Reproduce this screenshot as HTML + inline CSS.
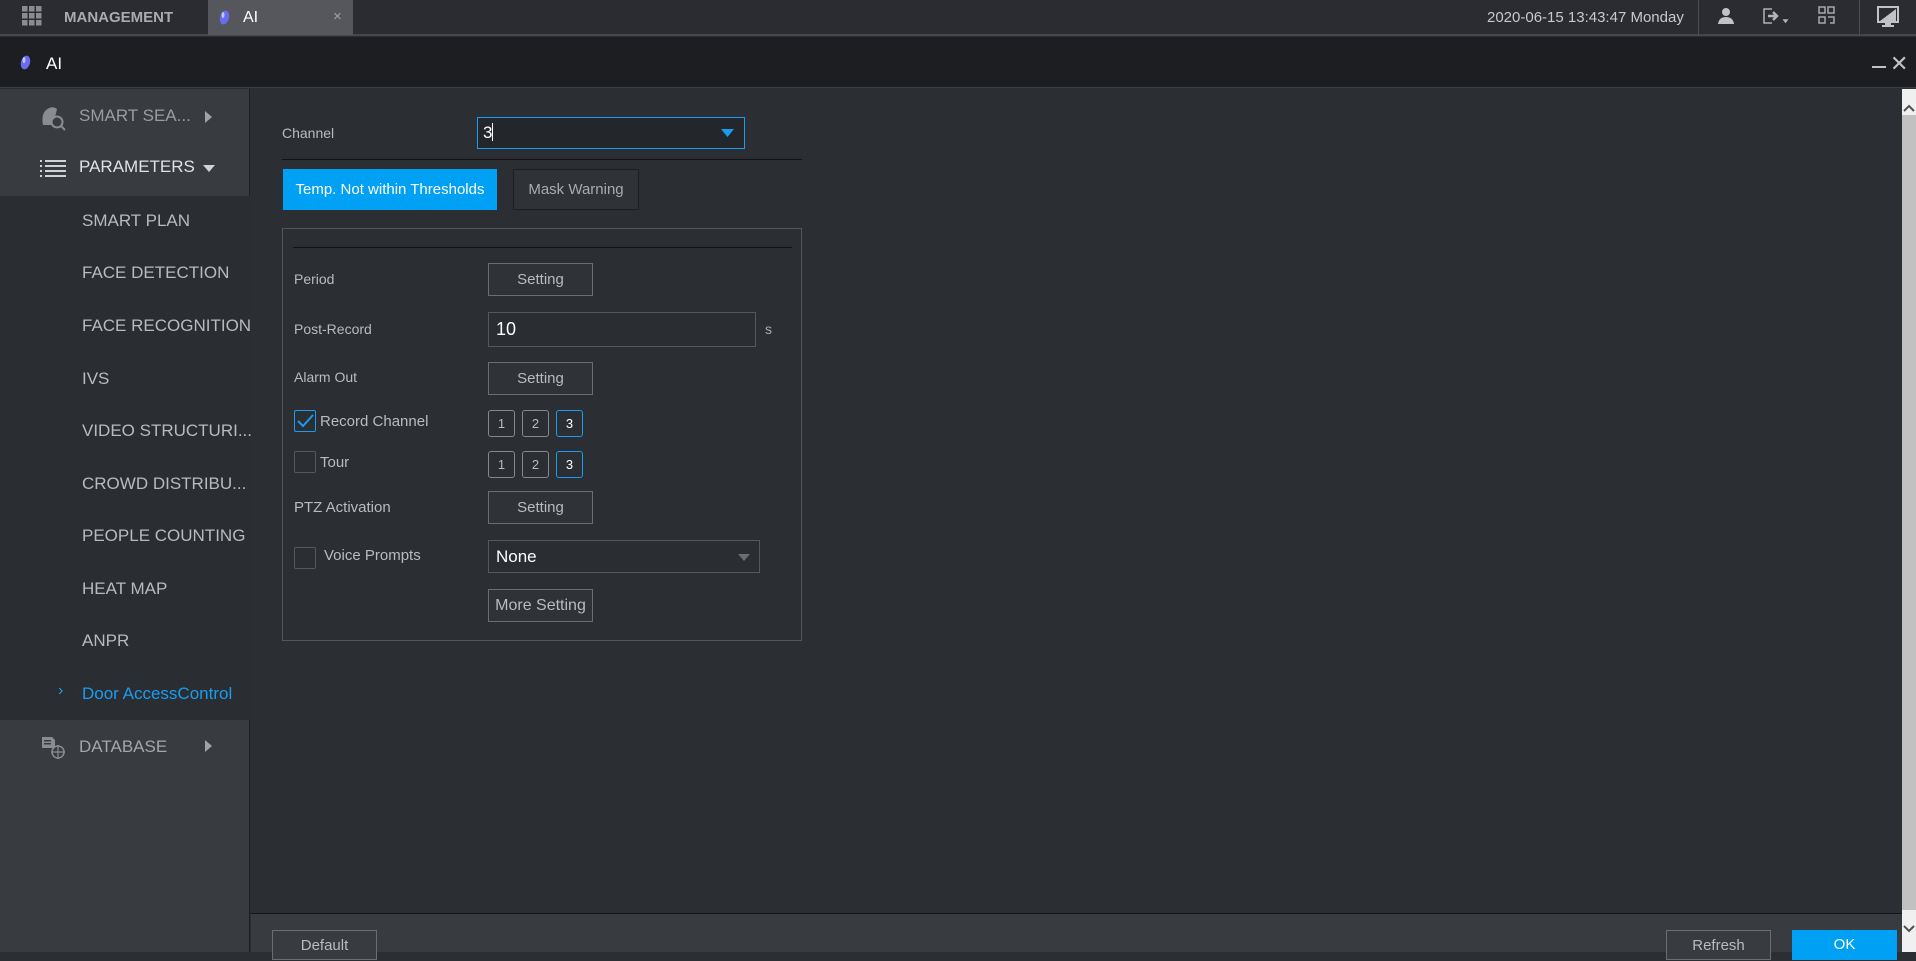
<!DOCTYPE html>
<html><head><meta charset="utf-8"><style>
*{margin:0;padding:0;box-sizing:border-box}
body{width:1916px;height:952px;overflow:hidden;background:#2b2e33;font-family:"Liberation Sans",Arial,sans-serif;position:relative;color:#c8c9cc}
.a{position:absolute}
.t{position:absolute;white-space:nowrap}
.btn{position:absolute;border:1px solid #6a6d72;background:#2f3237;color:#b9bbbe;font-size:15px;text-align:center}
.cb{position:absolute;width:22px;height:22px;border:1px solid #55585d;border-radius:2px}
.nb{position:absolute;width:27px;height:27px;border:1px solid #85888c;border-radius:3px;color:#b9bbbe;font-size:13px;text-align:center;line-height:25px}
.nb.s{border-color:#1a9cf0;color:#fff}
.side{font-size:17px;color:#b8babd}
</style></head><body>
<!-- top bar -->
<div class="a" style="left:0;top:0;width:1916px;height:36px;background:#2a2c31;border-bottom:2px solid #44474c"></div>
<svg class="a" style="left:22px;top:6px" width="20" height="20" viewBox="0 0 20 20" fill="#8a8c90"><rect x="0" y="0" width="5.5" height="5.5"/><rect x="7" y="0" width="5.5" height="5.5"/><rect x="14" y="0" width="5.5" height="5.5"/><rect x="0" y="7" width="5.5" height="5.5"/><rect x="7" y="7" width="5.5" height="5.5"/><rect x="14" y="7" width="5.5" height="5.5"/><rect x="0" y="14" width="5.5" height="5.5"/><rect x="7" y="14" width="5.5" height="5.5"/><rect x="14" y="14" width="5.5" height="5.5"/></svg>
<div class="t" style="left:64px;top:9px;font-size:15px;font-weight:bold;color:#a9abae">MANAGEMENT</div>
<div class="a" style="left:208px;top:0;width:145px;height:35px;background:#55575c"></div>
<svg class="a" style="left:219px;top:10px" width="11" height="15" viewBox="0 0 11 15"><ellipse cx="5.5" cy="7.5" rx="4.5" ry="7" fill="#6a6cf0" transform="rotate(15 5.5 7.5)"/><ellipse cx="4" cy="5" rx="1.5" ry="3" fill="#b8c8ff"/></svg>
<div class="t" style="left:243px;top:9px;font-size:16px;color:#fff">AI</div>
<div class="t" style="left:333px;top:8px;font-size:15px;color:#a0a2a6">×</div>
<div class="t" style="left:1487px;top:9px;font-size:15px;color:#c8c9cc">2020-06-15 13:43:47 Monday</div>
<div class="a" style="left:1698px;top:0;width:1px;height:36px;background:#4a4d52"></div>
<div class="a" style="left:1859px;top:0;width:1px;height:36px;background:#4a4d52"></div>
<svg class="a" style="left:1717px;top:7px" width="18" height="18" viewBox="0 0 18 18" fill="#c0c2c5"><circle cx="9" cy="5" r="4"/><path d="M1 17 Q2 10 9 10 Q16 10 17 17Z"/></svg>
<svg class="a" style="left:1762px;top:7px" width="30" height="18" viewBox="0 0 30 18" fill="none" stroke="#b0b2b5" stroke-width="1.5"><path d="M10 2H2V16H10"/><path d="M6 9H14M11 5L15 9L11 13" stroke-width="2.5"/><path d="M22 13L25 13L23.5 15Z" fill="#b0b2b5"/></svg>
<svg class="a" style="left:1818px;top:6px" width="18" height="20" viewBox="0 0 18 20" fill="none" stroke="#a6a8ab" stroke-width="1.5"><rect x="1" y="1" width="6" height="6"/><rect x="10" y="1" width="6" height="6"/><rect x="1" y="11" width="6" height="6"/><path d="M10 11H16V17H12"/></svg>
<svg class="a" style="left:1877px;top:6px" width="22" height="22" viewBox="0 0 22 22"><rect x="1" y="1" width="20" height="15" fill="none" stroke="#c0c2c5" stroke-width="2"/><path d="M3 15L19 3V15Z" fill="#c0c2c5"/><rect x="8" y="17" width="6" height="2" fill="#c0c2c5"/><rect x="5" y="19" width="12" height="2" fill="#c0c2c5"/></svg>
<!-- second bar -->
<div class="a" style="left:0;top:37px;width:1916px;height:51px;background:#1c1e21;border-bottom:1px solid #3a3d42"></div>
<svg class="a" style="left:20px;top:55px" width="11" height="15" viewBox="0 0 11 15"><ellipse cx="5.5" cy="7.5" rx="4.5" ry="7" fill="#6a6cf0" transform="rotate(15 5.5 7.5)"/><ellipse cx="4" cy="5" rx="1.5" ry="3" fill="#b8c8ff"/></svg>
<div class="t" style="left:46px;top:54px;font-size:17px;color:#fff">AI</div>
<div class="a" style="left:1872px;top:66px;width:14px;height:2px;background:#c0c2c5"></div>
<div class="t" style="left:1890px;top:51px;font-size:22px;color:#c0c2c5">✕</div>
<!-- sidebar -->
<div class="a" style="left:0;top:89px;width:250px;height:863px;background:#383b40;border-right:1px solid #1c1e21"></div>
<div class="a" style="left:0;top:196px;width:250px;height:524px;background:#2a2d32"></div>
<svg class="a" style="left:40px;top:105px" width="26" height="26" viewBox="0 0 26 26" fill="#8a8c90"><path d="M3 20Q1 10 6 5Q12 0 17 4L15 12Q11 14 12 20Z"/><circle cx="17" cy="17" r="5.5" fill="none" stroke="#8a8c90" stroke-width="2"/><path d="M21 21L25 25" stroke="#8a8c90" stroke-width="2"/></svg>
<div class="t side" style="left:79px;top:106px;color:#9a9ca0">SMART SEA...</div>
<svg class="a" style="left:205px;top:111px" width="7" height="12"><path d="M0 0L7 6L0 12Z" fill="#a0a2a6"/></svg>
<svg class="a" style="left:40px;top:159px" width="26" height="20" viewBox="0 0 26 20" fill="#d0d2d5"><rect x="0" y="1" width="2" height="2"/><rect x="5" y="1" width="21" height="2"/><rect x="0" y="6" width="2" height="2"/><rect x="5" y="6" width="21" height="2"/><rect x="0" y="11" width="2" height="2"/><rect x="5" y="11" width="21" height="2"/><rect x="0" y="16" width="2" height="2"/><rect x="5" y="16" width="21" height="2"/></svg>
<div class="t side" style="left:79px;top:157px;color:#e0e1e3">PARAMETERS</div>
<svg class="a" style="left:203px;top:165px" width="12" height="7"><path d="M0 0H12L6 7Z" fill="#d0d2d5"/></svg>
<div class="t side" style="left:82px;top:211px">SMART PLAN</div>
<div class="t side" style="left:82px;top:263px">FACE DETECTION</div>
<div class="t side" style="left:82px;top:316px">FACE RECOGNITION</div>
<div class="t side" style="left:82px;top:369px">IVS</div>
<div class="t side" style="left:82px;top:421px">VIDEO STRUCTURI...</div>
<div class="t side" style="left:82px;top:474px">CROWD DISTRIBU...</div>
<div class="t side" style="left:82px;top:526px">PEOPLE COUNTING</div>
<div class="t side" style="left:82px;top:579px">HEAT MAP</div>
<div class="t side" style="left:82px;top:631px">ANPR</div>
<div class="t side" style="left:58px;top:682px;color:#1a9cf0;font-size:16px">›</div>
<div class="t side" style="left:82px;top:684px;color:#1a9cf0">Door AccessControl</div>
<svg class="a" style="left:42px;top:736px" width="24" height="24" viewBox="0 0 24 24" fill="#8a8c90"><path d="M0 1H10L13 4V12H0Z"/><rect x="2" y="4" width="7" height="1.5" fill="#383b40"/><rect x="2" y="7" width="7" height="1.5" fill="#383b40"/><circle cx="16" cy="16" r="6" fill="#383b40" stroke="#8a8c90" stroke-width="1.5"/><path d="M16 9V23M9 16H23" stroke="#8a8c90" stroke-width="1.2"/></svg>
<div class="t side" style="left:79px;top:737px;color:#a4a6aa">DATABASE</div>
<svg class="a" style="left:205px;top:740px" width="7" height="12"><path d="M0 0L7 6L0 12Z" fill="#a0a2a6"/></svg>
<!-- content -->
<div class="t" style="left:282px;top:125px;font-size:14px;color:#b9bbbe">Channel</div>
<div class="a" style="left:477px;top:117px;width:268px;height:32px;border:1px solid #1a9cf0;background:#23262b"></div>
<div class="t" style="left:483px;top:123px;font-size:17px;color:#fff">3<span style="display:inline-block;width:1px;height:18px;background:#fff;vertical-align:-3px"></span></div>
<svg class="a" style="left:721px;top:129px" width="13" height="8"><path d="M0 0H13L6.5 8Z" fill="#1a9cf0"/></svg>
<div class="a" style="left:282px;top:159px;width:520px;height:1px;background:#121315"></div>
<div class="a" style="left:283px;top:169px;width:214px;height:41px;background:#00a0f5"></div>
<div class="t" style="left:283px;top:181px;width:214px;text-align:center;font-size:15px;color:#fff">Temp. Not within Thresholds</div>
<div class="a" style="left:513px;top:169px;width:126px;height:41px;border:1px solid #1c1e21;background:#2f3237"></div>
<div class="t" style="left:513px;top:181px;width:126px;text-align:center;font-size:15px;color:#a9abae">Mask Warning</div>
<div class="a" style="left:282px;top:228px;width:520px;height:413px;border:1px solid #53565b"></div>
<div class="a" style="left:293px;top:247px;width:499px;height:1px;background:#121315"></div>
<div class="t" style="left:294px;top:271px;font-size:14px;color:#b9bbbe">Period</div>
<div class="btn" style="left:488px;top:263px;width:105px;height:33px;line-height:31px">Setting</div>
<div class="t" style="left:294px;top:321px;font-size:14px;color:#b9bbbe">Post-Record</div>
<div class="a" style="left:488px;top:312px;width:268px;height:35px;border:1px solid #55585d;background:#2a2d32"></div>
<div class="t" style="left:496px;top:319px;font-size:18px;color:#fff">10</div>
<div class="t" style="left:765px;top:321px;font-size:14px;color:#a9abae">s</div>
<div class="t" style="left:294px;top:369px;font-size:14px;color:#b9bbbe">Alarm Out</div>
<div class="btn" style="left:488px;top:362px;width:105px;height:33px;line-height:31px">Setting</div>
<div class="cb" style="left:294px;top:410px;border-color:#1a9cf0"></div>
<svg class="a" style="left:297px;top:414px" width="17" height="14"><path d="M1 7L6 12L16 1" fill="none" stroke="#1a9cf0" stroke-width="2"/></svg>
<div class="t" style="left:320px;top:413px;font-size:15px;color:#b9bbbe">Record Channel</div>
<div class="nb" style="left:488px;top:410px">1</div><div class="nb" style="left:522px;top:410px">2</div><div class="nb s" style="left:556px;top:410px">3</div>
<div class="cb" style="left:294px;top:451px"></div>
<div class="t" style="left:320px;top:454px;font-size:15px;color:#b9bbbe">Tour</div>
<div class="nb" style="left:488px;top:451px">1</div><div class="nb" style="left:522px;top:451px">2</div><div class="nb s" style="left:556px;top:451px">3</div>
<div class="t" style="left:294px;top:499px;font-size:15px;color:#b9bbbe">PTZ Activation</div>
<div class="btn" style="left:488px;top:491px;width:105px;height:33px;line-height:31px">Setting</div>
<div class="cb" style="left:294px;top:547px"></div>
<div class="t" style="left:324px;top:547px;font-size:15px;color:#b9bbbe">Voice Prompts</div>
<div class="a" style="left:488px;top:540px;width:272px;height:33px;border:1px solid #55585d;background:#2a2d32"></div>
<div class="t" style="left:496px;top:547px;font-size:17px;color:#fff">None</div>
<svg class="a" style="left:738px;top:554px" width="12" height="7"><path d="M0 0H12L6 7Z" fill="#6a6d72"/></svg>
<div class="btn" style="left:488px;top:589px;width:105px;height:33px;line-height:31px;font-size:16px">More Setting</div>
<!-- footer -->
<div class="a" style="left:251px;top:913px;width:1651px;height:1px;background:#141517"></div>
<div class="a" style="left:251px;top:914px;width:1651px;height:38px;background:#383b40"></div>
<div class="btn" style="left:272px;top:930px;width:105px;height:30px;line-height:30px;font-size:15px;background:#383b40">Default</div>
<div class="btn" style="left:1666px;top:930px;width:105px;height:30px;line-height:30px;font-size:15px;background:#383b40">Refresh</div>
<div class="a" style="left:1792px;top:930px;width:105px;height:30px;background:#00a0f5;color:#fff;text-align:center;line-height:30px;font-size:15px">OK</div>
<!-- scrollbar -->
<div class="a" style="left:1902px;top:89px;width:14px;height:863px;background:#f0f0f0"></div>
<div class="a" style="left:1902px;top:115px;width:14px;height:795px;background:#c1c1c1"></div>
<svg class="a" style="left:1903px;top:104px" width="12" height="8"><path d="M1 7L6 2L11 7" fill="none" stroke="#505050" stroke-width="2"/></svg>
<svg class="a" style="left:1903px;top:925px" width="12" height="8"><path d="M1 1L6 6L11 1" fill="none" stroke="#505050" stroke-width="2"/></svg>
</body></html>
